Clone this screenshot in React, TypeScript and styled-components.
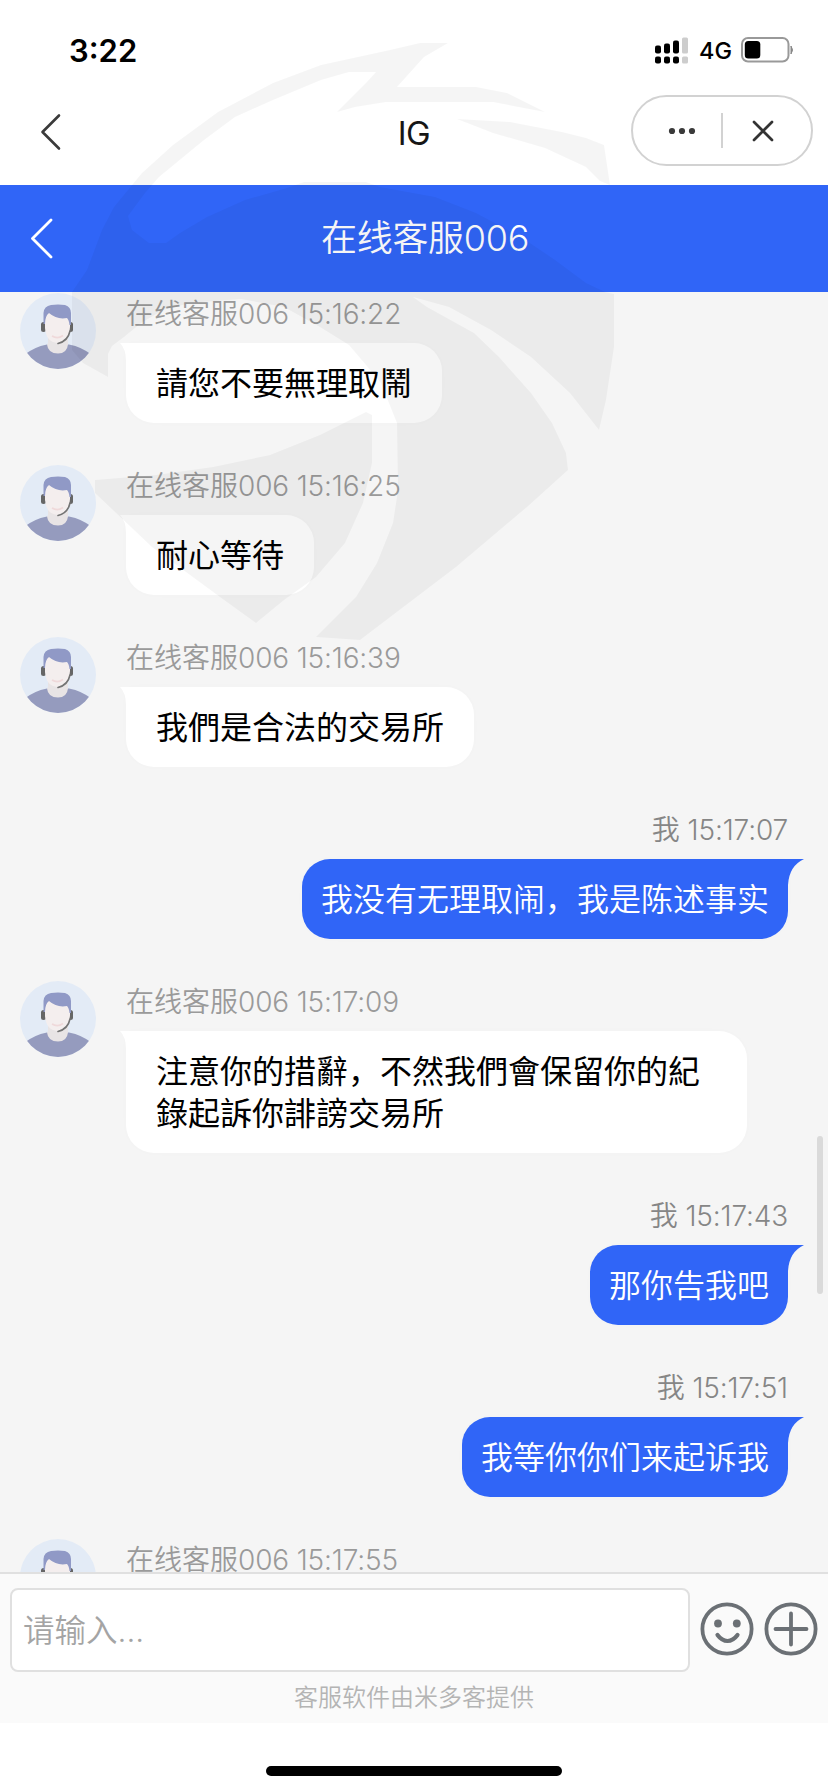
import React from "react";
import styled, { createGlobalStyle } from "styled-components";

const Global = createGlobalStyle`
  * { box-sizing: border-box; }
  html, body { margin: 0; padding: 0; background: #fff; }
  body { font-family: Inter, "Noto Sans CJK SC", sans-serif; }
`;

const Screen = styled.div`
  position: relative;
  width: 828px;
  height: 1792px;
  display: flex;
  flex-direction: column;
  background: #fff;
  overflow: hidden;
`;

const StatusBar = styled.div`
  height: 88px;
  flex: none;
  display: flex;
  align-items: center;
  justify-content: space-between;
  padding: 12px 34px 0 69px;
`;

const Clock = styled.span`
  font-size: 31px;
  font-weight: 600;
  color: #000;
`;

const StatusIcons = styled.div`
  display: flex;
  align-items: center;
`;

const Network = styled.span`
  font-size: 23.5px;
  font-weight: 500;
  width: 52px;
  padding: 1px 0 0 11px;
  margin-right: 1px;
  line-height: 28px;
  color: #000;
  white-space: nowrap;
`;

const NavBar = styled.div`
  height: 97px;
  flex: none;
  display: grid;
  grid-template-columns: 1fr auto 1fr;
  align-items: center;
  padding: 0 15px 11px 40px;
`;

const BackIcon = styled.svg`
  margin-top: 2px;
`;

const AppName = styled.span`
  font-size: 33px;
  line-height: 40px;
  letter-spacing: -0.6px;
  color: #161616;
  padding: 3px 0 0;
  margin-left: -25px;
`;

const Capsule = styled.div`
  justify-self: end;
  width: 182px;
  height: 71px;
  margin-top: -1px;
  border: 2px solid #d2d2d2;
  border-radius: 36px;
  display: flex;
  align-items: center;
  background: #fff;
`;

const CapsuleHalf = styled.div<{ $width: number; $shift?: number }>`
  width: ${(p) => p.$width}px;
  padding-left: ${(p) => p.$shift ?? 0}px;
  display: flex;
  justify-content: center;
`;

const CapsuleLine = styled.div`
  width: 2px;
  height: 35px;
  background: #d2d2d2;
`;

const ChatHeader = styled.div`
  height: 107px;
  flex: none;
  display: flex;
  align-items: center;
  background: #3065f7;
  padding-left: 30px;
`;

const ChatTitle = styled.span`
  flex: 1;
  text-align: center;
  font-size: 36px;
  font-weight: 350;
  letter-spacing: -0.3px;
  color: #fff;
  padding: 0 32px 7px 0;
`;

const Messages = styled.div`
  position: relative;
  flex: none;
  height: 1280px;
  background: #f5f5f5;
  overflow: hidden;
  padding: 1px 40px 0 20px;
  display: flex;
  flex-direction: column;
  gap: 42px;
`;

const Row = styled.div<{ $mine?: boolean }>`
  flex: none;
  display: flex;
  justify-content: ${(p) => (p.$mine ? "flex-end" : "flex-start")};
  gap: 30px;
`;

const Column = styled.div<{ $mine?: boolean }>`
  display: flex;
  flex-direction: column;
  align-items: ${(p) => (p.$mine ? "flex-end" : "flex-start")};
`;

const Meta = styled.div<{ $mine?: boolean }>`
  height: 50px;
  line-height: 42px;
  font-size: 28px;
  font-weight: 350;
  color: ${(p) => (p.$mine ? "#868686" : "#9a9a9a")};
  white-space: nowrap;
`;

const Digits = styled.span`
  letter-spacing: -0.15px;
`;

const Bubble = styled.div<{ $mine?: boolean }>`
  position: relative;
  max-width: 621px;
  padding: ${(p) => (p.$mine ? "20px 19px 18px" : "20px 30px 18px")};
  border-radius: ${(p) => (p.$mine ? "28px 0 28px 28px" : "0 28px 28px 28px")};
  background: ${(p) => (p.$mine ? "#3065f7" : "#fff")};
  color: ${(p) => (p.$mine ? "#fff" : "#000")};
  font-size: 32px;
  font-weight: ${(p) => (p.$mine ? 350 : 400)};
  line-height: 42px;
  box-shadow: 0 0 12px rgba(0, 0, 0, 0.012);
`;

const Tail = styled.svg<{ $mine?: boolean }>`
  position: absolute;
  top: 0;
  ${(p) => (p.$mine ? "right: -16px;" : "left: -6px;")}
`;

const ScrollThumb = styled.div`
  position: absolute;
  right: 5px;
  top: 844px;
  width: 6px;
  height: 158px;
  border-radius: 3px;
  background: #dadada;
`;

const Composer = styled.div`
  height: 151px;
  flex: none;
  background: #fafafa;
  border-top: 2px solid #e0e0e0;
  padding: 14px 10px 0;
`;

const ComposerRow = styled.div`
  display: flex;
  align-items: center;
`;

const Input = styled.div`
  width: 680px;
  height: 84px;
  border: 2px solid #e0e0e0;
  border-radius: 8px;
  background: #fff;
  padding: 0 0 4px 11px;
  display: flex;
  align-items: center;
  font-size: 31.5px;
  font-weight: 350;
  color: #a4a4a4;
`;

const Tools = styled.div`
  display: flex;
  gap: 10px;
  margin: -2px 0 0 10.5px;
`;

const Credit = styled.div`
  text-align: center;
  margin-top: 8px;
  font-size: 24px;
  line-height: 36px;
  font-weight: 350;
  color: #b4b4b4;
`;

const HomeArea = styled.div`
  flex: 1;
  display: flex;
  justify-content: center;
  padding-top: 43px;
`;

const HomeBar = styled.div`
  width: 296px;
  height: 10px;
  border-radius: 5px;
  background: #000;
`;

const Overlay = styled.svg`
  position: absolute;
  left: 0;
  top: 0;
  pointer-events: none;
`;

const Signal = () => (
  <svg width="33" height="27" viewBox="0 0 33 27">
    <g fill="#000">
      <rect x="0" y="8.5" width="6" height="8" rx="2" />
      <rect x="9" y="6.5" width="6" height="10" rx="2" />
      <rect x="18" y="3.5" width="6" height="13" rx="2" />
      <rect x="0" y="19.5" width="6" height="7" rx="2" />
      <rect x="9" y="19.5" width="6" height="7" rx="2" />
      <rect x="18" y="19.5" width="6" height="7" rx="2" />
    </g>
    <g fill="#cdcdcd">
      <rect x="27" y="0.5" width="6" height="16" rx="1.5" />
      <rect x="27" y="19.5" width="6" height="7" rx="1.5" />
    </g>
  </svg>
);

const Battery = () => (
  <svg width="53" height="26" viewBox="0 0 53 26">
    <rect x="1" y="1" width="46.5" height="23.5" rx="6" fill="#fff" stroke="#999" strokeWidth="2" />
    <rect x="3.8" y="4" width="15.5" height="17.5" rx="3.5" fill="#000" />
    <path d="M50 9 Q53 13 50 17 Z" fill="#888" stroke="#888" />
  </svg>
);

const Avatar = () => (
  <svg width="76" height="76" viewBox="0 0 76 76">
    <defs>
      <clipPath id="face">
        <circle cx="38" cy="38" r="38" />
      </clipPath>
    </defs>
    <g clipPath="url(#face)">
      <rect width="76" height="76" fill="#e3ebf6" />
      <path d="M4 62 Q14 54 27 51.5 L49 51.5 Q62 54 72 62 L76 76 L0 76 Z" fill="#959bbe" />
      <path d="M28 40 H48 V51.5 Q47 60.5 38 60.5 Q28 60.5 27 51.5 L28 50 Z" fill="#e8e4e5" />
      <rect x="21" y="29" width="5" height="10" rx="2.5" fill="#666" />
      <rect x="48" y="29" width="5" height="10" rx="2.5" fill="#666" />
      <path d="M25 20 H50 V34 Q49 49 37.5 50 Q26 49 25 35 Z" fill="#f4eeee" />
      <path d="M23.5 31 V20 Q24 13 31 12 Q38 11 45 12 Q51 14 51 20 V32 H49.5 Q49 27 47 25 Q37 27 29 20 Q25 23 25 31 Z" fill="#9099c6" />
      <path d="M32 43 Q37.5 46.5 43 42.5" fill="none" stroke="#efd9da" strokeWidth="1.6" />
      <path d="M50 38 Q48 48 38 50.5" fill="none" stroke="#747474" strokeWidth="1.6" strokeLinecap="round" />
    </g>
  </svg>
);

const Smile = () => (
  <svg width="54" height="54" viewBox="0 0 54 54" fill="none" stroke="#6b7075" strokeWidth="3.8">
    <circle cx="27" cy="27" r="24.6" />
    <circle cx="18" cy="21.5" r="3.9" fill="#6b7075" stroke="none" />
    <circle cx="36.8" cy="21.5" r="3.9" fill="#6b7075" stroke="none" />
    <path d="M17.5 33 Q22 39 27.5 39 Q33 39 37.5 33" strokeWidth="4.2" strokeLinecap="round" />
  </svg>
);

const Plus = () => (
  <svg width="54" height="54" viewBox="0 0 54 54" fill="none" stroke="#6b7075" strokeWidth="3.8" strokeLinecap="round">
    <circle cx="27" cy="27" r="24.6" />
    <path d="M27 11.5 V42.5 M11.5 27 H42.5" />
  </svg>
);

const Watermark = () => (
  <Overlay width="828" height="700" viewBox="0 0 828 700" fill="rgba(0,0,0,0.04)">
    <path
      fillRule="evenodd"
      d="M448 43 L424 57 L397 87 L476 87 L507 93 L545 112 L493 102 L386 102 L355 107 L337 112 L366 83 L376 72 L349 72 L321 80 L273 100 L235 117 L204 140 L159 177 L145 193 L128 216 L132 230 L149 243 L166 243 L180 233 L207 217 L245 200 L287 188 L304 182 L366 182 L380 187 L435 197 L476 213 L521 237 L555 260 L586 283 L605 292 L614 294 L614 347 L606 400 L599 430 L570 393 L531 357 L491 330 L449 307 L413 297 L427 307 L474 333 L499 357 L531 393 L552 423 L566 453 L568 470 L527 507 L456 567 L360 640 L316 637 L356 597 L377 563 L393 523 L398 490 L397 423 L391 408 L381 383 L366 365 L349 345 L320 327 L284 307 L241 299 L190 303 L163 310 L141 323 L124 337 L112 346 L108 354 L108 377 L83 363 L72 350 L72 292 L87 270 L102 230 L114 207 L142 173 L173 145 L218 112 L273 83 L321 65 L390 50 L420 43 Z"
    />
    <path d="M457 119 L510 122 L562 132 L586 138 L604 145 L610 185 L600 181 L586 167 L545 148 L493 133 Z" />
    <path d="M95 480 L156 475 L213 467 L270 455 L320 435 L366 412 L372 415 L372 463 L363 503 L345 543 L316 577 L284 600 L256 623 L220 597 L152 547 L95 493 Z" />
  </Overlay>
);

type Message = { time: string; text?: string; mine?: boolean };

const messages: Message[] = [
  { time: "15:16:22", text: "請您不要無理取鬧" },
  { time: "15:16:25", text: "耐心等待" },
  { time: "15:16:39", text: "我們是合法的交易所" },
  { time: "15:17:07", text: "我没有无理取闹，我是陈述事实", mine: true },
  { time: "15:17:09", text: "注意你的措辭，不然我們會保留你的紀錄起訴你誹謗交易所" },
  { time: "15:17:43", text: "那你告我吧", mine: true },
  { time: "15:17:51", text: "我等你你们来起诉我", mine: true },
  { time: "15:17:55" },
];

const MessageRow = ({ time, text, mine }: Message) => (
  <Row $mine={mine}>
    {!mine && <Avatar />}
    <Column $mine={mine}>
      <Meta $mine={mine}>
        {mine ? "我" : "在线客服"}
        <Digits>{mine ? ` ${time}` : `006 ${time}`}</Digits>
      </Meta>
      {text && (
        <Bubble $mine={mine}>
          {mine ? (
            <Tail $mine width="17" height="28" viewBox="0 0 17 28">
              <path d="M0 0 H17 Q2 7 1 26 H0 Z" fill="#3065f7" />
            </Tail>
          ) : (
            <Tail width="7" height="18" viewBox="0 0 7 18">
              <path d="M0 0 H7 V18 H6 Q6 6 0 0 Z" fill="#fff" />
            </Tail>
          )}
          {text}
        </Bubble>
      )}
    </Column>
  </Row>
);

export default function App() {
  return (
    <Screen>
      <Global />
      <StatusBar>
        <Clock>3:22</Clock>
        <StatusIcons>
          <Signal />
          <Network>4G</Network>
          <Battery />
        </StatusIcons>
      </StatusBar>
      <NavBar>
        <BackIcon width="22" height="38" viewBox="0 0 22 38" fill="none" stroke="#3a3a3a" strokeWidth="2.6" strokeLinecap="round" strokeLinejoin="round">
          <path d="M19 2.5 L2.5 19 L19 35.5" />
        </BackIcon>
        <AppName>IG</AppName>
        <Capsule>
          <CapsuleHalf $width={88} $shift={9}>
            <svg width="28" height="8" viewBox="0 0 28 8" fill="#3a3a3a">
              <circle cx="4" cy="4" r="3.1" />
              <circle cx="14" cy="4" r="3.1" />
              <circle cx="24" cy="4" r="3.1" />
            </svg>
          </CapsuleHalf>
          <CapsuleLine />
          <CapsuleHalf $width={80}>
            <svg width="22" height="22" viewBox="0 0 22 22" stroke="#333" strokeWidth="2.7" strokeLinecap="round">
              <path d="M2 2 L20 20 M20 2 L2 20" />
            </svg>
          </CapsuleHalf>
        </Capsule>
      </NavBar>
      <ChatHeader>
        <svg width="24" height="42" viewBox="0 0 24 42" fill="none" stroke="#fff" strokeWidth="2.8" strokeLinecap="round" strokeLinejoin="round">
          <path d="M21 2 L2.5 20.5 L21 39" />
        </svg>
        <ChatTitle>在线客服006</ChatTitle>
      </ChatHeader>
      <Messages>
        {messages.map((m) => (
          <MessageRow key={m.time} {...m} />
        ))}
        <ScrollThumb />
      </Messages>
      <Composer>
        <ComposerRow>
          <Input>请输入...</Input>
          <Tools>
            <Smile />
            <Plus />
          </Tools>
        </ComposerRow>
        <Credit>客服软件由米多客提供</Credit>
      </Composer>
      <HomeArea>
        <HomeBar />
      </HomeArea>
      <Watermark />
    </Screen>
  );
}
